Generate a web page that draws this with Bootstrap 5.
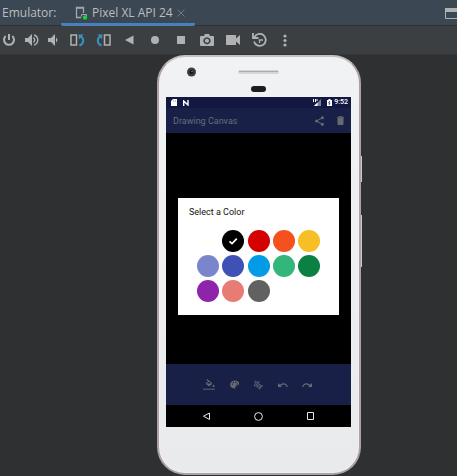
<!DOCTYPE html>
<html lang="en">
<head>
<meta charset="utf-8">
<meta name="viewport" content="width=device-width, initial-scale=1">
<title>Emulator</title>
<link href="https://cdn.jsdelivr.net/npm/bootstrap@5.3.0/dist/css/bootstrap.min.css" rel="stylesheet">
<style>
  body { background: #2f3032; color: #bbbdbf; font: 12px/18px "Open Sans", sans-serif; }
  svg { display: block; flex: none; }
  .btn { --bs-btn-padding-x: 0; --bs-btn-padding-y: 0; --bs-btn-border-width: 0; line-height: 1; }
  .tool-header { background: #3c4754; height: 26px; border-bottom: 1px solid #2e3133; }
  .tool-title { width: 61px; padding-left: 2px; }
  .tool-tab { width: 134px; height: 26px; padding: 2px 10px 0 14px; border-bottom: 3px solid #4a80bd; border-radius: 0 0 2px 2px; }
  .tab-link, .tab-link:hover { color: #bbbdbf; gap: 4px; }
  .window-btn { color: #afb1b3; }
  .toolbar { background: #3c3f41; height: 29px; border-bottom: 1px solid #333638; }
  .toolbar .btn { color: #afb1b3; width: 26px; height: 28px; display: flex; align-items: center; justify-content: center; }
  .toolbar .power-set { gap: 2px; }
  .toolbar .power-set .btn { width: 20px; }
  .stage { padding: 0 0 2px 157px; }
  .phone { width: 204px; padding: 0 8px 46px 7px; background: linear-gradient(#f0f2f3, #e9eaeb); border: 2px solid #aaa3a5; border-top-color: #c4c1c1; border-radius: 28px; box-shadow: inset 0 0 0 1px #f5eef1; position: relative; }
  .side-key { position: absolute; left: 202px; width: 1px; background: #c9c9ca; }
  .key-power { top: 99px; height: 26px; }
  .key-volume { top: 158px; height: 52px; }
  .screen { background: #000; font-family: Roboto, sans-serif; font-size: 9px; line-height: 12px; }
  .status { background: #131842; color: #fff; height: 11px; padding: 0 3px 0 5px; gap: 2px; font-size: 7px; line-height: 11px; font-weight: 500; }
  .appbar { background: #182048; height: 25px; padding: 0 7px; color: #6b6c76; }
  .appbar h1 { font-size: 9px; line-height: 12px; font-weight: 400; }
  .appbar .actions { gap: 13px; }
  .appbar .btn, .drawbar .btn { color: #686a70; }
  .canvas-area { padding: 65px 12px 49px; }
  .picker { background: #fff; color: #111; padding: 8px 11px 13px; }
  .picker h2 { font-size: 9px; line-height: 12px; font-weight: 400; margin-bottom: 12px; }
  .swatches { display: grid; grid-template-columns: repeat(5, 22px); justify-content: space-between; row-gap: 3px; padding: 0 8px; }
  .swatch { appearance: none; width: 22px; height: 22px; margin: 0; border-radius: 50%; background: var(--tone) center / 22px no-repeat; }
  .swatch:checked { background-image: url("data:image/svg+xml,%3Csvg xmlns='http://www.w3.org/2000/svg' viewBox='0 0 22 22'%3E%3Cpath d='M7.5 11.3l2.5 2.3 4.8-5' fill='none' stroke='white' stroke-width='1.7'/%3E%3C/svg%3E"); }
  .t-white { --tone: #fff; } .t-black { --tone: #000; } .t-red { --tone: #d50000; } .t-orange { --tone: #f4511e; } .t-yellow { --tone: #f6bf26; }
  .t-lavender { --tone: #7986cb; } .t-blue { --tone: #3f51b5; } .t-sky { --tone: #039be5; } .t-mint { --tone: #33b679; } .t-green { --tone: #0b8043; }
  .t-purple { --tone: #8e24aa; } .t-pink { --tone: #e67c73; } .t-gray { --tone: #616161; }
  .drawbar { background: #182048; height: 41px; padding: 0 39px 0 37px; }
  .navkeys { height: 22px; padding: 0 36px; }
  .navkeys .btn { color: #e8e8e8; }
</style>
</head>
<body>
<header class="tool-header d-flex">
  <div class="tool-title pt-1">Emulator:</div>
  <div class="tool-tab d-flex align-items-center justify-content-between">
    <a href="#device" class="tab-link d-flex align-items-center text-decoration-none">
      <svg width="13" height="14" viewBox="0 0 13 14" fill="none" stroke="#a3a8ad"><path d="M6 11.500H1.500V1.500h7V7" stroke-width="1.300"/><path d="M2 2h6" stroke-width="1.500"/><path d="M6.500 10.500v-2h5v3" /><circle cx="10" cy="11.500" r="2.200" fill="#14d633" stroke="none"/></svg>
      <span>Pixel XL API 24</span>
    </a>
    <button type="button" class="btn" aria-label="Close tab"><svg width="8" height="8" viewBox="0 0 8 8" stroke="#737a82"><path d="M.5.5l7 7m0-7l-7 7"/></svg></button>
  </div>
  <button type="button" class="btn window-btn ms-auto d-flex pt-1" aria-label="Window mode"><svg class="mt-1" width="12" height="12" viewBox="0 0 12 12"><path d="M.5 1h12v9.500H.5z" fill="none" stroke="currentColor"/><path d="M0 0h12v4H0z" fill="currentColor"/></svg></button>
</header>

<nav class="toolbar d-flex" aria-label="Emulator controls">
  <div class="power-set d-flex">
    <button type="button" class="btn" aria-label="Power"><svg width="16" height="14" viewBox="0 0 16 14" fill="none" stroke="currentColor" stroke-width="2"><path d="M7 1v6M3.700 3a5 5 0 1 0 6.600 0"/></svg></button>
    <button type="button" class="btn" aria-label="Volume up"><svg width="14" height="12" viewBox="0 0 14 12"><path d="M0 4h3l4-4v12L3 8H0z" fill="currentColor"/><path d="M8.500 3.500q2.500 2.500 0 5M9 1c5 1.500 5 8.500 0 10" fill="none" stroke="currentColor" stroke-width="1.400"/></svg></button>
    <button type="button" class="btn" aria-label="Volume down"><svg width="12" height="12" viewBox="0 0 12 12"><path d="M0 4h3l4-4v12L3 8H0z" fill="currentColor"/><path d="M8 3.500q3 2.500 0 5z" fill="currentColor"/></svg></button>
  </div>
  <button type="button" class="btn" aria-label="Rotate left"><svg width="15" height="14" viewBox="0 0 15 14" fill="none"><path d="M1 2h5.500v10H1z" stroke="currentColor" stroke-width="1.500"/><path d="M9.500 12.500c5-2 4.500-7 1-9.500" stroke="#3592c4" stroke-width="2"/><path d="M8.500 1.500h5l-4.500 5z" fill="#3592c4"/></svg></button>
  <button type="button" class="btn" aria-label="Rotate right"><svg width="15" height="14" viewBox="0 0 15 14" fill="none"><path d="M8.500 2H14v10H8.500z" stroke="currentColor" stroke-width="1.500"/><path d="M5.500 12.500c-5-2-4.500-7-1-9.500" stroke="#3592c4" stroke-width="2"/><path d="M6.500 1.500h-5L6 6.500z" fill="#3592c4"/></svg></button>
  <button type="button" class="btn" aria-label="Back"><svg width="9" height="10" viewBox="0 0 9 10" fill="currentColor"><path d="M8.500.5v9L0 5z"/></svg></button>
  <button type="button" class="btn" aria-label="Home"><svg width="8" height="8" viewBox="0 0 8 8" fill="currentColor"><circle cx="4" cy="4" r="4"/></svg></button>
  <button type="button" class="btn" aria-label="Overview"><svg width="8" height="8" viewBox="0 0 8 8" fill="currentColor"><path d="M0 0h8v8H0z"/></svg></button>
  <button type="button" class="btn" aria-label="Screenshot"><svg width="14" height="12" viewBox="0 0 14 12" fill="currentColor" fill-rule="evenodd"><path d="M1 2h3l1-2h4l1 2h3q1 0 1 1v8q0 1-1 1H1q-1 0-1-1V3q0-1 1-1zM7 3.200a3.600 3.600 0 1 0 .01 0zM7 4.800a2 2 0 1 1-.01 0z"/></svg></button>
  <button type="button" class="btn" aria-label="Record"><svg width="14" height="10" viewBox="0 0 14 10" fill="currentColor"><path d="M0 0h10v3.500L14 0v10l-4-3.500V10H0z"/></svg></button>
  <button type="button" class="btn" aria-label="Snapshots"><svg width="15" height="14" viewBox="0 0 15 14" fill="none" stroke="currentColor" stroke-width="1.800"><path d="M2.500 4A6 6 0 1 1 2 8.500M1 0v5h5.500"/><path d="M11 7H7.500v3" stroke-width="1.300"/></svg></button>
  <button type="button" class="btn" aria-label="More"><svg width="4" height="13" viewBox="0 0 4 13" fill="currentColor"><circle cx="2" cy="2" r="1.600"/><circle cx="2" cy="6.500" r="1.600"/><circle cx="2" cy="11" r="1.600"/></svg></button>
</nav>

<main class="stage" id="device">
  <div class="phone">
    <span class="side-key key-power"></span><span class="side-key key-volume"></span>
    <svg width="185" height="40" viewBox="0 0 185 40"><circle cx="25.500" cy="15" r="4.500" fill="#3b3d3f"/><circle cx="25.500" cy="15" r="2" fill="#111"/><circle cx="26" cy="14.500" r=".8" fill="#888"/><rect x="72" y="13" width="41" height="4" rx="2" fill="#d4d7d7"/><path d="M73 14.500h39" stroke="#a9adac"/><rect x="85" y="29" width="15" height="6" rx="3" fill="#1c1d1e"/></svg>
    <div class="screen">
      <div class="status d-flex align-items-center">
        <svg width="6" height="7" viewBox="0 0 6 7" fill="#fff"><path d="M2 0h4v7H0V2z"/><path d="M2 1.500h1v1H2zm2 0h1v1H4z" fill="#889"/></svg>
        <svg class="ms-1" width="8" height="6" viewBox="0 0 8 6" fill="none" stroke="#fff" stroke-width="1.400"><path d="M.7 6V1L5 5V0"/></svg>
        <svg class="ms-auto" width="8" height="7" viewBox="0 0 8 7"><path d="M8 0v7H1z" fill="#7b7e98"/><path d="M4.500 3.500V7H1z" fill="#fff"/><path d="M.5 0v3M2.500 0v3M4 0v2" stroke="#fff"/></svg>
        <svg class="ms-1" width="5" height="7" viewBox="0 0 5 7"><path d="M1.500 0h2v1H5v6H0V1h1.500z" fill="#fff"/><path d="M3 2L1.500 4H3L2 6" fill="none" stroke="#131842" stroke-width=".7"/></svg>
        <span>9:52</span>
      </div>
      <div class="appbar d-flex align-items-center justify-content-between">
        <h1 class="mb-0">Drawing Canvas</h1>
        <div class="actions d-flex align-items-center">
          <button type="button" class="btn" aria-label="Share"><svg width="9" height="10" viewBox="0 0 9 10" fill="currentColor"><path d="M7.500 1.700L1.500 5l6 3.300" fill="none" stroke="currentColor"/><circle cx="7.400" cy="1.700" r="1.500"/><circle cx="1.600" cy="5" r="1.500"/><circle cx="7.400" cy="8.300" r="1.500"/></svg></button>
          <button type="button" class="btn" aria-label="Delete"><svg width="7" height="9" viewBox="0 0 7 9" fill="currentColor"><path d="M0 .7h2L2.500 0h2l.5.700h2v1H0zM.5 2h6v6q0 1-1 1h-4q-1 0-1-1z"/></svg></button>
        </div>
      </div>
      <div class="canvas-area">
        <section class="picker">
          <h2>Select a Color</h2>
          <div class="swatches" role="radiogroup" aria-label="Select a Color">
            <input type="radio" name="tone" class="swatch t-white" aria-label="White">
            <input type="radio" name="tone" class="swatch t-black" aria-label="Black" checked>
            <input type="radio" name="tone" class="swatch t-red" aria-label="Red">
            <input type="radio" name="tone" class="swatch t-orange" aria-label="Orange">
            <input type="radio" name="tone" class="swatch t-yellow" aria-label="Yellow">
            <input type="radio" name="tone" class="swatch t-lavender" aria-label="Lavender">
            <input type="radio" name="tone" class="swatch t-blue" aria-label="Blue">
            <input type="radio" name="tone" class="swatch t-sky" aria-label="Sky">
            <input type="radio" name="tone" class="swatch t-mint" aria-label="Mint">
            <input type="radio" name="tone" class="swatch t-green" aria-label="Green">
            <input type="radio" name="tone" class="swatch t-purple" aria-label="Purple">
            <input type="radio" name="tone" class="swatch t-pink" aria-label="Pink">
            <input type="radio" name="tone" class="swatch t-gray" aria-label="Gray">
          </div>
        </section>
      </div>
      <div class="drawbar d-flex align-items-center justify-content-between">
        <button type="button" class="btn" aria-label="Fill"><svg width="12" height="11" viewBox="0 0 12 11" fill="currentColor"><path d="M3 4.500L6 2l3 2.500-3 2.300z" fill="none" stroke="currentColor"/><path d="M3 4.500h6L6 7zM4 0l2.500 2-.7.700-2.500-2zM10.500 5.500q2 2.500 0 2.500t0-2.500z"/><path d="M0 9.500h12V11H0z" opacity=".6"/></svg></button>
        <button type="button" class="btn" aria-label="Palette"><svg width="9" height="9" viewBox="0 0 10 9" fill="currentColor" fill-rule="evenodd"><path d="M5 0c7 .5 6 6 2.500 5.500C5 5.500 7 9 5 9-1.500 8.500-1.500.5 5 0zM2 3.500v1.200h1.200V3.500zM3.400 1.500v1.200h1.200V1.500zM5.800 1.500v1.200H7V1.500zM7.300 3.500v1.200h1.200V3.500z"/></svg></button>
        <button type="button" class="btn" aria-label="Brush"><svg width="10" height="10" viewBox="0 0 11 11" fill="none" stroke="currentColor" stroke-width="1.100"><path d="M1 2.500c2-2 3-1.500 2.500 0S.5 5.500 2 6.500 5.500.5 6.500 1.500 3 8 4.500 8s2-3.500 3.500-3 .5 5-1 5-.5-3.500 4-3.500"/></svg></button>
        <button type="button" class="btn" aria-label="Undo"><svg width="10" height="6" viewBox="0 0 10 6"><path d="M1.500 3.500Q7-.5 9.500 5" fill="none" stroke="currentColor" stroke-width="1.200"/><path d="M0 1v4h4z" fill="currentColor"/></svg></button>
        <button type="button" class="btn" aria-label="Redo"><svg width="10" height="6" viewBox="0 0 10 6"><path d="M8.500 3.500Q3-.5.5 5" fill="none" stroke="currentColor" stroke-width="1.200"/><path d="M10 1v4H6z" fill="currentColor"/></svg></button>
      </div>
      <div class="navkeys d-flex align-items-center justify-content-between">
        <button type="button" class="btn" aria-label="Back"><svg width="9" height="8" viewBox="0 0 9 8" fill="none" stroke="currentColor"><path d="M7.500 1v6.500L1.500 4.200z"/></svg></button>
        <button type="button" class="btn" aria-label="Home"><svg width="9" height="9" viewBox="0 0 9 9" fill="none" stroke="currentColor"><circle cx="4.500" cy="4.500" r="3.900"/></svg></button>
        <button type="button" class="btn" aria-label="Overview"><svg width="9" height="8" viewBox="0 0 9 8" fill="none" stroke="currentColor"><path d="M1.500.5h6v7h-6z"/></svg></button>
      </div>
    </div>
  </div>
</main>
<script src="https://cdn.jsdelivr.net/npm/bootstrap@5.3.0/dist/js/bootstrap.bundle.min.js"></script>
</body>
</html>
